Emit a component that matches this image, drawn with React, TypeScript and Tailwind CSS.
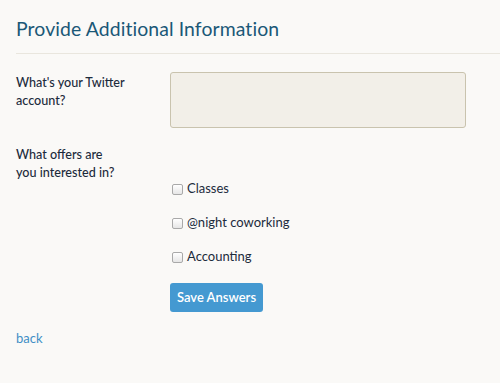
import React from "react";

const font = { fontFamily: "Lato, 'Open Sans', sans-serif" };

function Check({ label }: { label: string }) {
  return (
    <label className="flex items-center h-[14px] gap-[4px] text-[13px] text-[#1c2b3c]">
      <span className="w-[11px] h-[11px] ml-[2px] rounded-[2px] border border-[#a9a9a9] bg-gradient-to-b from-white to-[#e6e6e6]" />
      <span>{label}</span>
    </label>
  );
}

export default function App() {
  return (
    <div className="w-[500px] h-[383px] bg-[#faf9f7] overflow-hidden" style={font}>
      <div className="pl-4">
        <h1 className="pt-[17px] text-[19.4px] leading-[24px] text-[#1a5877] tracking-[0.1px]">Provide Additional Information</h1>
        <div className="mt-[12px] h-px bg-[#e9e6de]" />
      </div>
      <div className="pl-4 pt-[18px] flex">
        <div className="w-[154px] text-[12.6px] font-medium leading-[18px] text-[#1c2b3c] pt-[2px]">
          What's your Twitter<br />account?
        </div>
        <div className="w-[296px] h-[56px] rounded-[3px] border border-[#c9c3ae] bg-[#f2efe8]" />
      </div>
      <div className="pl-4 pt-[18px] text-[12.6px] font-medium leading-[18px] text-[#1c2b3c]">
        What offers are<br />you interested in?
      </div>
      <div className="pl-[170px] flex flex-col gap-[20px] mt-0">
        <Check label="Classes" />
        <Check label="@night coworking" />
        <Check label="Accounting" />
      </div>
      <div className="pl-[170px] pt-[19px]">
        <button className="w-[93px] h-[29px] rounded-[3px] bg-[#4499d1] text-white text-[13px] font-semibold">
          Save Answers
        </button>
      </div>
      <div className="pl-4 pt-[17px] text-[13px] text-[#3f8fc6]">back</div>
    </div>
  );
}
